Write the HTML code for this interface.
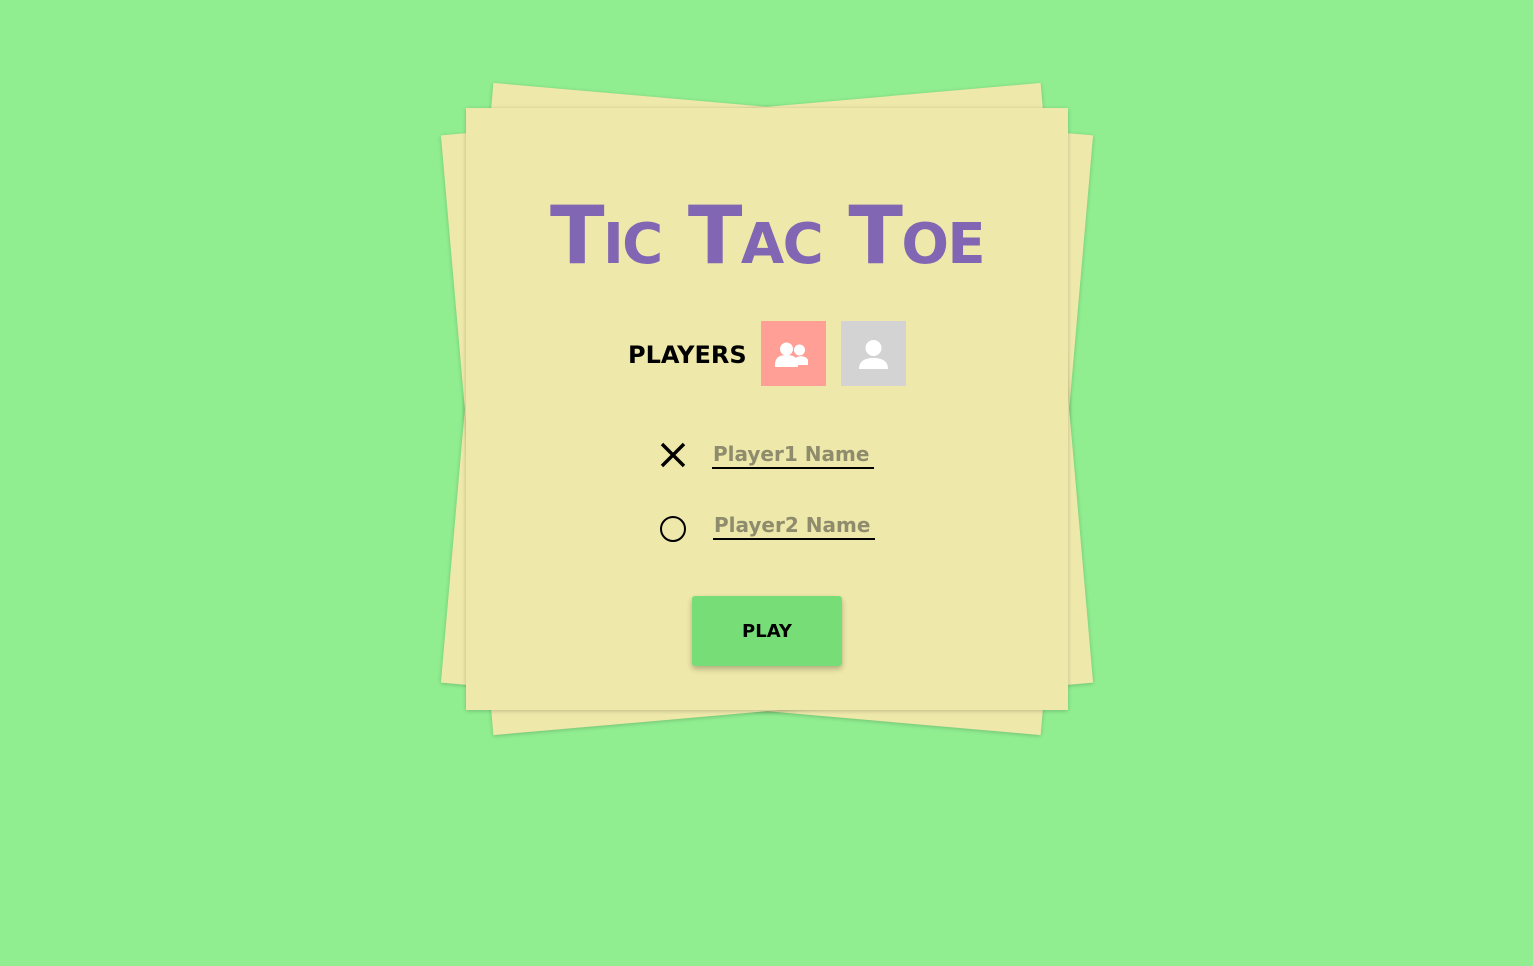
<!DOCTYPE html>
<html><head><style>
html,body{margin:0;padding:0;width:1533px;height:966px;background:#90ee90;overflow:hidden;font-family:"DejaVu Sans","Liberation Sans",sans-serif}
.card{position:absolute;left:466px;top:108px;width:602px;height:602px;background:#eee8aa;box-shadow:0 1px 4px rgba(0,0,0,.2)}
.r1{transform:rotate(5deg)}.r2{transform:rotate(-5deg)}
h1{position:absolute;left:0;width:602px;top:78px;margin:0;text-align:center;font-size:80px;font-weight:bold;font-variant:small-caps;color:#8166b3;line-height:100px;letter-spacing:-1.6px}
.pl{position:absolute;left:162px;top:233px;font-size:24px;font-weight:bold;color:#000}
.b{position:absolute;top:213px;width:65px;height:65px}
.in{position:absolute;font-size:20px;font-weight:bold;color:#8e8c6c;border-bottom:2px solid #000;width:162px;height:27px;line-height:24px;padding-left:1px;box-sizing:border-box}
.play{position:absolute;left:226px;top:488px;width:150px;height:70px;background:#77dd77;border-radius:3px;box-shadow:0 3px 6px rgba(0,0,0,.25);text-align:center;line-height:72px;font-weight:bold;font-size:18px}
</style></head><body>
<div class="card r1"></div><div class="card r2"></div>
<div class="card">
<h1>Tic Tac Toe</h1>
<div class="pl">PLAYERS</div>
<div class="b" style="left:295px;background:#ff9f96">
<svg width="65" height="65"><g fill="#fff"><circle cx="25.5" cy="28" r="6.5"/><circle cx="38.5" cy="29" r="5.5"/><path d="M33 39c2-5 12-5 14 0v5H33z"/><path d="M14 44c0-8 5-10 11.5-10S37 36 37 44v2H14z"/></g></svg></div>
<div class="b" style="left:375px;background:#d3d3d3">
<svg width="65" height="65"><g fill="#fff"><circle cx="32.5" cy="27" r="8"/><path d="M18 48c0-8 6-11 14.5-11S47 40 47 48z"/></g></svg></div>
<svg style="position:absolute;left:194px;top:334px" width="26" height="26"><path d="M2 2L24 24M24 2L2 24" stroke="#000" stroke-width="3.4"/></svg>
<div class="in" style="left:246px;top:334px">Player1 Name</div>
<svg style="position:absolute;left:193px;top:407px" width="28" height="28"><circle cx="14" cy="14" r="12" fill="none" stroke="#000" stroke-width="2"/></svg>
<div class="in" style="left:247px;top:405px">Player2 Name</div>
<div class="play">PLAY</div>
</div>
</body></html>
